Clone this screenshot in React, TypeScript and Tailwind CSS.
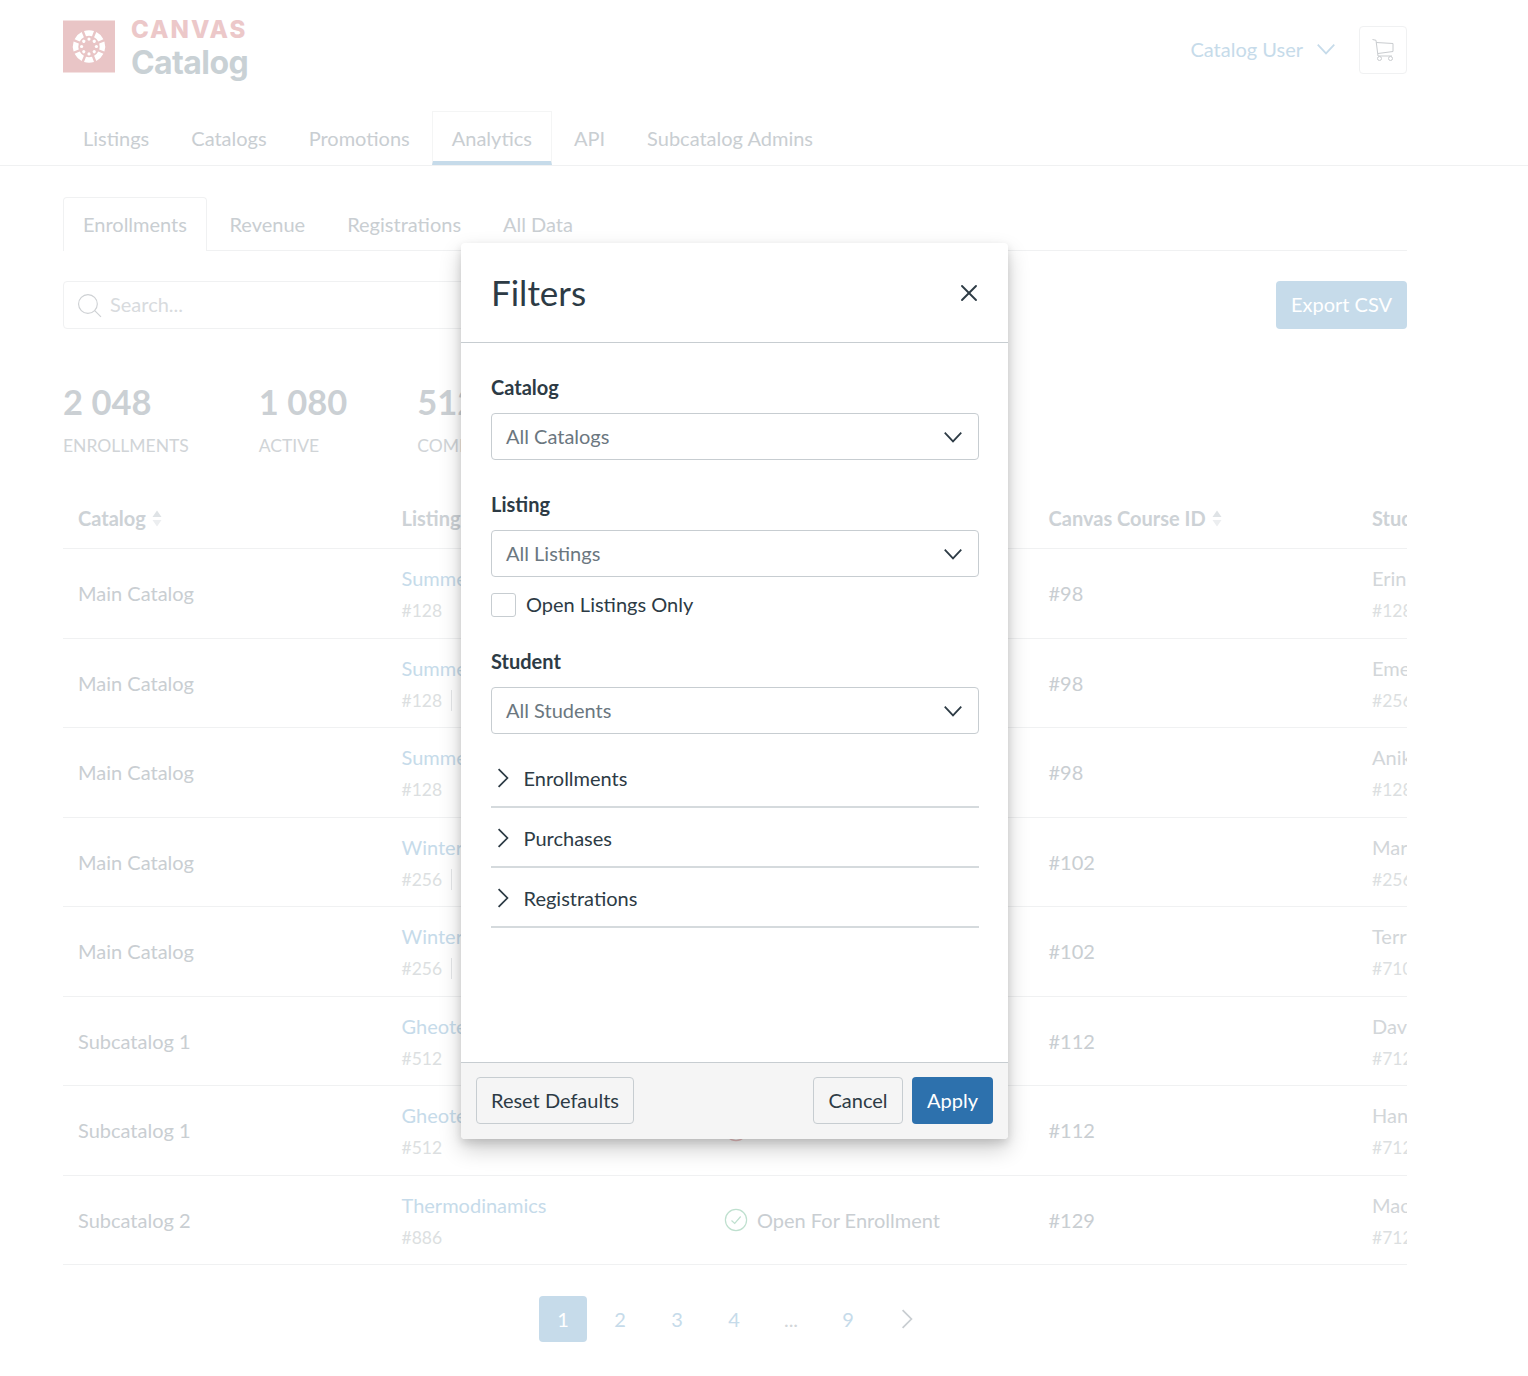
import React from "react";
import { X } from "lucide-react";

const rows = [
  { catalog: "Main Catalog", listing: "Summer Session", id: "#128", extra: "", course: "#98", student: "Erin Hall", sid: "#1285", status: "open" },
  { catalog: "Main Catalog", listing: "Summer Session", id: "#128", extra: "Section 2", course: "#98", student: "Emerson Cole", sid: "#2563", status: "open" },
  { catalog: "Main Catalog", listing: "Summer Session", id: "#128", extra: "", course: "#98", student: "Anika Ross", sid: "#1287", status: "open" },
  { catalog: "Main Catalog", listing: "Winter Session", id: "#256", extra: "Section 1", course: "#102", student: "Mara Lane", sid: "#2568", status: "open" },
  { catalog: "Main Catalog", listing: "Winter Session", id: "#256", extra: "Section 2", course: "#102", student: "Terry Dean", sid: "#7105", status: "open" },
  { catalog: "Subcatalog 1", listing: "Gheotechnics", id: "#512", extra: "", course: "#112", student: "David Shaw", sid: "#7123", status: "open" },
  { catalog: "Subcatalog 1", listing: "Gheotechnics", id: "#512", extra: "", course: "#112", student: "Hannah Fox", sid: "#7124", status: "closed" },
  { catalog: "Subcatalog 2", listing: "Thermodinamics", id: "#886", extra: "", course: "#129", student: "Mackenzie Ray", sid: "#7125", status: "open" },
];

const Chevron = ({ dir, className }: { dir: "down" | "right"; className: string }) => (
  <svg viewBox="0 0 20 20" fill="none" stroke="currentColor" strokeWidth="1.6" className={className}>
    {dir === "down" ? <path d="M2.5 6l7.5 8 7.5-8" /> : <path d="M6 2l8 8-8 8" />}
  </svg>
);

const Sort = () => (
  <svg viewBox="0 0 10 16" className="w-[10px] h-[17px] ml-[6px] mt-[1px]">
    <path d="M5 0l4.5 6.5h-9z" fill="#dfe3e6" />
    <path d="M5 16l4.5-6.5h-9z" fill="#eceef0" />
  </svg>
);

const CanvasLogo = () => {
  const angles = [0, 45, 90, 135, 180, 225, 270, 315];
  return (
    <svg viewBox="-26 -26 52 52" className="w-[52px] h-[53px] shrink-0">
      <rect x="-26" y="-26" width="52" height="52" fill="#e9c5c6" />
      {angles.map((a) => (
        <g key={a} transform={`rotate(${a})`} fill="#fff">
          <path d="M-5 -15.4 A16.2 16.2 0 0 1 5 -15.4 L3 -10.2 A10.6 10.6 0 0 0 -3 -10.2 Z" />
          <circle cx="0" cy="-7.4" r="1.6" />
        </g>
      ))}
    </svg>
  );
};

const Select = ({ label, value }: { label: string; value: string }) => (
  <div>
    <p className="text-[20px] leading-[28px] font-bold text-[#2d3b45] mb-[12px]">{label}</p>
    <div className="h-[47px] border border-[#c7cdd1] rounded-[4px] pl-[14px] pr-[14px] flex items-center justify-between text-[20px] text-[#6b7780]">
      <span className="pb-[2px]">{value}</span>
      <Chevron dir="down" className="w-[22px] h-[22px] text-[#2d3b45]" />
    </div>
  </div>
);

const Section = ({ label }: { label: string }) => (
  <div className="h-[60px] border-b-2 border-[#d5dadd] flex items-center pl-[1px] pt-[1px] text-[20px] text-[#2d3b45]">
    <Chevron dir="right" className="w-[22px] h-[22px] mr-[9.5px]" />
    {label}
  </div>
);

export default function App() {
  return (
    <div className="relative h-[1376px] overflow-hidden bg-white text-[20px] text-[#c9ced2] font-['Lato','Liberation_Sans',sans-serif]">
      {/* Header */}
      <div className="h-[111px] w-[1470px] px-[63px] flex justify-between">
        <div className="flex pt-[20px] gap-[16px]">
          <CanvasLogo />
          <div className="font-['Inter',sans-serif] -mt-[4px]">
            <p className="text-[24px] leading-[28px] font-extrabold text-[#ecc8c9] tracking-[2px]">CANVAS</p>
            <p className="text-[32px] leading-[37px] font-bold text-[#c9d1d5] tracking-[-0.6px]">Catalog</p>
          </div>
        </div>
        <div className="flex items-start pt-[26px]">
          <div className="flex items-center h-[46px] text-[#c6dbea]">
            <span>Catalog User</span>
            <Chevron dir="down" className="w-[22px] h-[22px] ml-[12px]" />
          </div>
          <div className="ml-[22px] w-[48px] h-[48px] border border-[#f0f1f2] rounded-[4px] flex items-center justify-center">
            <svg viewBox="0 0 24 24" fill="none" stroke="#c9cccf" strokeWidth="1" className="w-[24px] h-[24px]">
              <path d="M1.5 1.5l3.5.8 2 15.7h14" />
              <path d="M5.3 4.5l16.7 1v8l-15 2" />
              <circle cx="8.5" cy="20.5" r="2" />
              <circle cx="19.5" cy="20.5" r="2" />
            </svg>
          </div>
        </div>
      </div>

      {/* Main tabs */}
      <div className="h-[55px] px-[63px] border-b border-[#f0f1f2] flex gap-[2px]">
        {["Listings", "Catalogs", "Promotions", "Analytics", "API", "Subcatalog Admins"].map((t) => (
          <div
            key={t}
            className={
              t === "Analytics"
                ? "h-[54px] px-[19px] pt-[2px] border border-b-0 border-[#f4f5f5] border-b-[4px] border-b-[#c6dbea] flex items-center"
                : "h-[54px] px-[20px] flex items-center"
            }
          >
            {t}
          </div>
        ))}
      </div>

      <div className="px-[63px] w-[1470px]">
        {/* Sub tabs */}
        <div className="mt-[31px] h-[54px] border-b border-[#f0f1f2] flex gap-[2px]">
          {["Enrollments", "Revenue", "Registrations", "All Data"].map((t) => (
            <div
              key={t}
              className={
                t === "Enrollments"
                  ? "h-[54px] pl-[19px] pr-[19.5px] pb-[2px] border border-b-0 border-[#f0f1f2] rounded-t-[4px] bg-white flex items-center"
                  : "h-[53px] px-[20px] flex items-center"
              }
            >
              {t}
            </div>
          ))}
        </div>

        {/* Search */}
        <div className="mt-[30px] flex justify-between">
          <div className="w-[500px] h-[48px] pb-[2px] border border-[#f0f1f2] rounded-[4px] flex items-center pl-[13px] text-[#d8dbde]">
            <svg viewBox="0 0 24 24" fill="none" stroke="#ced1d4" strokeWidth="1.1" className="w-[25px] h-[25px] mr-[8px] mt-[2px]">
              <circle cx="10.5" cy="10.5" r="9" />
              <path d="M17 17l6 6" />
            </svg>
            Search...
          </div>
          <div className="w-[131px] h-[48px] pb-[2px] rounded-[4px] bg-[#c6dbea] text-white flex items-center justify-center">
            Export CSV
          </div>
        </div>

        {/* Stats */}
        <div className="mt-[50px] flex gap-[70px]">
          {[
            ["2 048", "ENROLLMENTS"],
            ["1 080", "ACTIVE"],
            ["512", "COMPLETED"],
          ].map(([n, l]) => (
            <div key={l}>
              <p className="text-[34.5px] leading-[46px] font-bold text-[#cbd0d4]">{n}</p>
              <p className="mt-[9px] text-[17.5px] leading-[24px] text-[#d0d4d7]">{l}</p>
            </div>
          ))}
        </div>

        {/* Table */}
        <div className="mt-[30px] overflow-hidden">
          <div className="grid grid-cols-[repeat(5,323.5px)] h-[61px] border-b border-[#f0f1f2] font-bold text-[#cdd2d6]">
            {["Catalog", "Listing", "Status", "Canvas Course ID", "Student"].map((h) => (
              <div key={h} className="pl-[15px] flex items-center whitespace-nowrap">
                {h}
                <Sort />
              </div>
            ))}
          </div>
          {rows.map((r, i) => (
            <div key={i} className="grid grid-cols-[repeat(5,323.5px)] h-[89.5px] border-b border-[#f0f1f2]">
              <div className="pl-[15px] flex items-center">{r.catalog}</div>
              <div className="pl-[15px] pt-[3px] flex flex-col justify-center">
                <p className="leading-[28px] text-[#c6dbea]">{r.listing}</p>
                <p className="mt-[5px] text-[17.5px] leading-[28px] text-[#dcdfe1]">
                  {r.id}
                  {r.extra && <span className="ml-[9px] pl-[9px] border-l border-[#e4e6e8]">{r.extra}</span>}
                </p>
              </div>
              <div className="pl-[14px] flex items-center gap-[9px]">
                {r.status === "open" ? (
                  <svg viewBox="0 0 24 24" fill="none" stroke="#bfe0cf" strokeWidth="1.2" className="w-[24px] h-[24px]">
                    <circle cx="12" cy="12" r="10.6" />
                    <path d="M7.5 12.5l3.2 3 6-7" />
                  </svg>
                ) : (
                  <svg viewBox="0 0 24 24" fill="none" stroke="#ecc3c4" strokeWidth="1.2" className="w-[24px] h-[24px]">
                    <circle cx="12" cy="12" r="10.6" />
                  </svg>
                )}
                {r.status === "open" ? "Open For Enrollment" : "Closed"}
              </div>
              <div className="pl-[15px] flex items-center">{r.course}</div>
              <div className="pl-[15px] pt-[3px] flex flex-col justify-center whitespace-nowrap">
                <p className="leading-[28px] text-[#d2d6d9]">{r.student}</p>
                <p className="mt-[5px] text-[17.5px] leading-[28px] text-[#dcdfe1]">{r.sid}</p>
              </div>
            </div>
          ))}
        </div>

        {/* Pagination */}
        <div className="mt-[31px] pl-[476px] flex gap-[9px] text-[#c6dbea]">
          {["1", "2", "3", "4", "...", "9"].map((p) => (
            <div
              key={p}
              className={
                p === "1"
                  ? "w-[48px] h-[46px] rounded-[4px] bg-[#c6dbea] text-white flex items-center justify-center"
                  : p === "..."
                    ? "w-[48px] h-[46px] text-[#d2d6d9] flex items-center justify-center"
                    : "w-[48px] h-[46px] flex items-center justify-center"
              }
            >
              {p}
            </div>
          ))}
          <div className="w-[48px] h-[46px] pl-[4px] flex items-center justify-center text-[#c9ced2]">
            <Chevron dir="right" className="w-[22px] h-[22px]" />
          </div>
        </div>
      </div>

      {/* Filters modal */}
      <div className="absolute left-[461px] top-[243px] w-[547px] h-[896px] rounded-[4px] bg-white flex flex-col overflow-hidden shadow-[0_4px_8px_rgba(0,0,0,0.12),0_10px_22px_rgba(0,0,0,0.2)]">
        <div className="h-[100px] shrink-0 pb-[1px] border-b border-[#c7cdd1] px-[30px] flex items-center justify-between">
          <p className="text-[35px] text-[#2d3b45]">Filters</p>
          <X className="w-[28px] h-[28px] mt-[1px] text-[#2d3b45] -mr-[5px]" strokeWidth={1.6} />
        </div>
        <div className="flex-1 pl-[30px] pr-[29px] pt-[30px]">
          <Select label="Catalog" value="All Catalogs" />
          <div className="mt-[30px]">
            <Select label="Listing" value="All Listings" />
          </div>
          <div className="mt-[16px] h-[24px] flex items-center gap-[10px] text-[20px] text-[#2d3b45]">
            <span className="w-[25px] h-[24px] border border-[#c7cdd1] rounded-[3px]"></span>
            <span className="pb-[2px]">Open Listings Only</span>
          </div>
          <div className="mt-[30px]">
            <Select label="Student" value="All Students" />
          </div>
          <div className="mt-[14px]">
            <Section label="Enrollments" />
            <Section label="Purchases" />
            <Section label="Registrations" />
          </div>
        </div>
        <div className="h-[77px] shrink-0 border-t border-[#c7cdd1] bg-[#f5f5f5] px-[15px] pt-[14px] flex items-start justify-between text-[#2d3b45]">
          <div className="h-[47px] px-[14px] pb-[2px] border border-[#c7cdd1] rounded-[4px] flex items-center">Reset Defaults</div>
          <div className="flex gap-[9px]">
            <div className="h-[47px] px-[14.5px] pb-[2px] border border-[#c7cdd1] rounded-[4px] flex items-center">Cancel</div>
            <div className="h-[47px] px-[15px] pb-[2px] rounded-[4px] bg-[#2d71ad] text-white flex items-center">Apply</div>
          </div>
        </div>
      </div>
    </div>
  );
}
